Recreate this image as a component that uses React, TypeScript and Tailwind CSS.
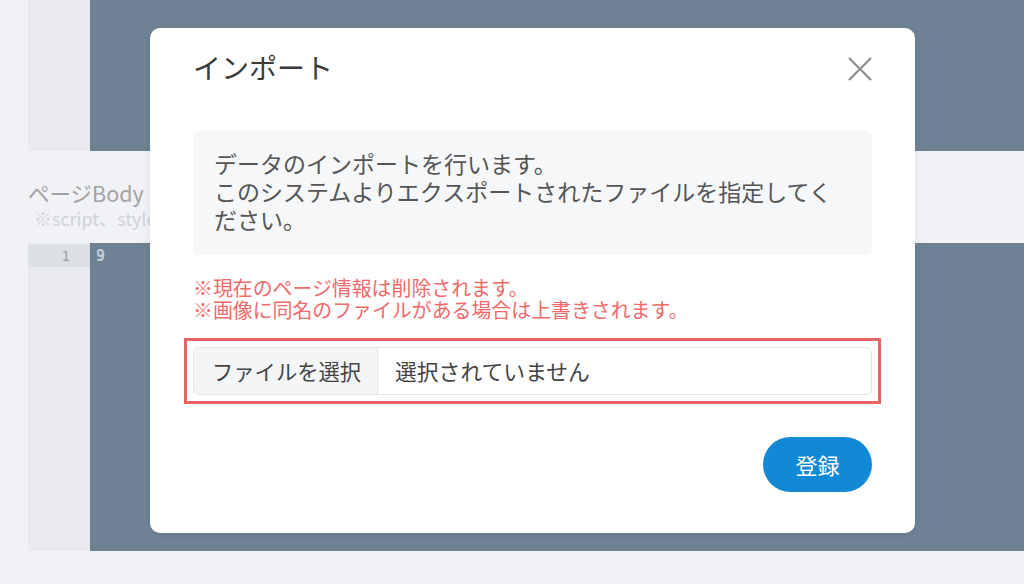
import React from "react";

const font = { fontFamily: '"Noto Sans CJK JP", "Noto Sans", sans-serif' };

export default function App() {
  return (
    <div className="relative w-[1024px] h-[584px] overflow-hidden bg-[#f0f2f5]" style={font}>
      {/* top editor */}
      <div className="flex h-[151px]">
        <div className="w-[28px]" />
        <div className="w-[62px] bg-[#e8eaed]" />
        <div className="flex-1 bg-[#6f8294]" />
      </div>
      {/* label band */}
      <div className="h-[92px] pl-[28px] pt-[29px]">
        <div className="text-[21.5px] leading-[26px] text-[#a3a3a3]">ページBody</div>
        <div className="pl-[6px] text-[18px] leading-[24px] text-[#d0d3d7]">※script、style</div>
      </div>
      {/* bottom editor */}
      <div className="flex h-[308px]">
        <div className="w-[28px]" />
        <div className="w-[62px] bg-[#e8eaed] pt-[2px]">
          <div className="h-[22px] bg-[#dcdfe3] pr-[20px] text-right text-[14px] leading-[22px] text-[#a0a0a0]" style={{ fontFamily: '"DejaVu Sans Mono", monospace' }}>1</div>
        </div>
        <div className="flex-1 bg-[#6f8294] pt-[2px] pl-[6px]">
          <div className="text-[15px] leading-[22px] font-bold text-[#c6ced6]" style={{ fontFamily: '"DejaVu Sans Mono", monospace' }}>9</div>
        </div>
      </div>

      {/* modal */}
      <div className="absolute left-[150px] top-[28px] w-[765px] h-[505px] rounded-[10px] bg-white px-[43px] pt-[22px] flex flex-col shadow-[0_2px_8px_rgba(0,0,0,0.08)]">
        <div className="flex items-center justify-between h-[34px]">
          <div className="text-[28px] leading-[34px] text-[#3a3a3a]">インポート</div>
          <svg width="26" height="26" viewBox="0 0 26 26" className="mr-[-1px] mt-[4px]">
            <path d="M2 2 L24 24 M24 2 L2 24" stroke="#8a8a8a" strokeWidth="2" />
          </svg>
        </div>

        <div className="mt-[47px] h-[124px] rounded-[6px] bg-[#f6f7f9] pl-[21px] pt-[18px] text-[23px] leading-[28px] text-[#555555] whitespace-nowrap">
          データのインポートを行います。
          <br />
          このシステムよりエクスポートされたファイルを指定してく
          <br />
          ださい。
        </div>

        <div className="mt-[22px] text-[19.9px] leading-[22px] text-[#f06a6a] whitespace-nowrap">
          ※現在のページ情報は削除されます。
          <br />
          ※画像に同名のファイルがある場合は上書きされます。
        </div>

        <div className="mt-[17px] mx-[-9px] border-[3px] border-[#e86464] p-[6px]">
          <div className="flex h-[48px] rounded-[6px] border border-[#e4e5e7] overflow-hidden">
            <div className="flex items-center w-[184px] shrink-0 bg-[#f4f5f7] border-r border-[#e4e5e7] pl-[18px] text-[21.3px] text-[#444444]">
              ファイルを選択
            </div>
            <div className="flex items-center pl-[17px] text-[21.8px] text-[#444444]">選択されていません</div>
          </div>
        </div>

        <div className="mt-[33px] flex justify-end">
          <div className="flex h-[55px] w-[109px] items-center justify-center rounded-full bg-[#1189d4] text-[22px] text-white">
            登録
          </div>
        </div>
      </div>
    </div>
  );
}
